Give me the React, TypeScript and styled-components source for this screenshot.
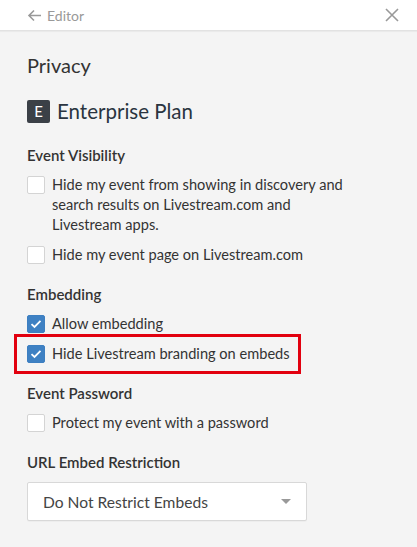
import styled, { createGlobalStyle } from "styled-components";

const GlobalStyle = createGlobalStyle`
  html, body {
    margin: 0;
    padding: 0;
    background: #f4f4f4;
    font-family: Lato, "Open Sans", Arial, sans-serif;
    color: #333;
  }
  * { box-sizing: border-box; }
`;

const Page = styled.div`
  width: 417px;
  min-height: 547px;
  background: #f4f4f4;
`;

const TopBar = styled.div`
  height: 31px;
  background: #fff;
  border-bottom: 1px solid #e2e2e2;
  box-shadow: 0 1px 1px rgba(0, 0, 0, 0.04);
  display: flex;
  align-items: center;
  justify-content: space-between;
  padding: 0 18px 0 27px;
`;

const BackLink = styled.a`
  display: flex;
  align-items: center;
  gap: 5px;
  color: #999;
  font-size: 14px;
  text-decoration: none;
`;

const Body = styled.div`
  padding: 21px 27px 0;
`;

const Title = styled.h1`
  margin: 0;
  font-size: 20px;
  font-weight: 400;
  line-height: 26px;
  color: #333;
`;

const PlanRow = styled.div`
  display: flex;
  align-items: center;
  gap: 7px;
  margin-top: 21px;
`;

const PlanBadge = styled.span`
  width: 23px;
  height: 23px;
  border-radius: 2px;
  background: #3b4047;
  color: #fff;
  font-size: 15px;
  display: flex;
  align-items: center;
  justify-content: center;
`;

const PlanName = styled.span`
  font-size: 20.5px;
  color: #2a3440;
`;

const Section = styled.div<{ $top: number }>`
  margin-top: ${(p) => p.$top}px;
`;

const SectionTitle = styled.h2`
  margin: 0 0 10px;
  font-size: 15px;
  font-weight: 600;
  line-height: 20px;
  color: #333;
`;

const Option = styled.label<{ $highlight?: boolean }>`
  display: flex;
  align-items: flex-start;
  gap: 7px;
  font-size: 14.6px;
  line-height: 20px;
  color: #333;
  margin-bottom: 10px;
  ${(p) =>
    p.$highlight
      ? `
    border: 3px solid #e2000f;
    margin-left: -13px;
    padding: 7px 0 7px 10px;
    width: 287px;
    white-space: nowrap;
    margin-top: -10px;
    margin-bottom: 0;
  `
      : ""}
`;

const Box = styled.span<{ $checked?: boolean }>`
  flex: none;
  width: 18px;
  height: 18px;
  margin-top: 1px;
  border-radius: 2px;
  border: 1px solid ${(p) => (p.$checked ? "#3d7fc1" : "#d4d4d4")};
  background: ${(p) => (p.$checked ? "#3f81c3" : "#fff")};
  display: flex;
  align-items: center;
  justify-content: center;
`;

const Select = styled.div`
  width: 280px;
  height: 39px;
  background: #fff;
  border: 1px solid #d8d8d8;
  border-radius: 2px;
  display: flex;
  align-items: center;
  justify-content: space-between;
  padding: 0 15px 0 15px;
  font-size: 15.6px;
  color: #444;
  box-shadow: 0 1px 1px rgba(0, 0, 0, 0.03);
`;

const Caret = styled.span`
  width: 0;
  height: 0;
  border-left: 5px solid transparent;
  border-right: 5px solid transparent;
  border-top: 5px solid #999;
`;

function Check({ checked }: { checked?: boolean }) {
  return (
    <Box $checked={checked}>
      {checked && (
        <svg width="12" height="10" viewBox="0 0 12 10">
          <path d="M1.5 5.2 L4.5 8 L10.5 1.8" fill="none" stroke="#fff" strokeWidth="1.8" />
        </svg>
      )}
    </Box>
  );
}

export default function App() {
  return (
    <Page>
      <GlobalStyle />
      <TopBar>
        <BackLink>
          <svg width="15" height="13" viewBox="0 0 15 13">
            <path d="M14 6.5 H2 M7 1.5 L2 6.5 L7 11.5" fill="none" stroke="#999" strokeWidth="1.6" />
          </svg>
          Editor
        </BackLink>
        <svg width="14" height="14" viewBox="0 0 14 14">
          <path d="M1 1 L13 13 M13 1 L1 13" stroke="#999" strokeWidth="1.6" />
        </svg>
      </TopBar>
      <Body>
        <Title>Privacy</Title>
        <PlanRow>
          <PlanBadge>E</PlanBadge>
          <PlanName>Enterprise Plan</PlanName>
        </PlanRow>
        <Section $top={22}>
          <SectionTitle>Event Visibility</SectionTitle>
          <Option>
            <Check />
            <span>
              Hide my event from showing in discovery and
              <br />
              search results on Livestream.com and
              <br />
              Livestream apps.
            </span>
          </Option>
          <Option>
            <Check />
            <span>Hide my event page on Livestream.com</span>
          </Option>
        </Section>
        <Section $top={19}>
          <SectionTitle>Embedding</SectionTitle>
          <Option>
            <Check checked />
            <span>Allow embedding</span>
          </Option>
          <Option $highlight>
            <Check checked />
            <span>Hide Livestream branding on embeds</span>
          </Option>
        </Section>
        <Section $top={9}>
          <SectionTitle>Event Password</SectionTitle>
          <Option>
            <Check />
            <span>Protect my event with a password</span>
          </Option>
        </Section>
        <Section $top={19}>
          <SectionTitle>URL Embed Restriction</SectionTitle>
          <Select>
            <span>Do Not Restrict Embeds</span>
            <Caret />
          </Select>
        </Section>
      </Body>
    </Page>
  );
}
